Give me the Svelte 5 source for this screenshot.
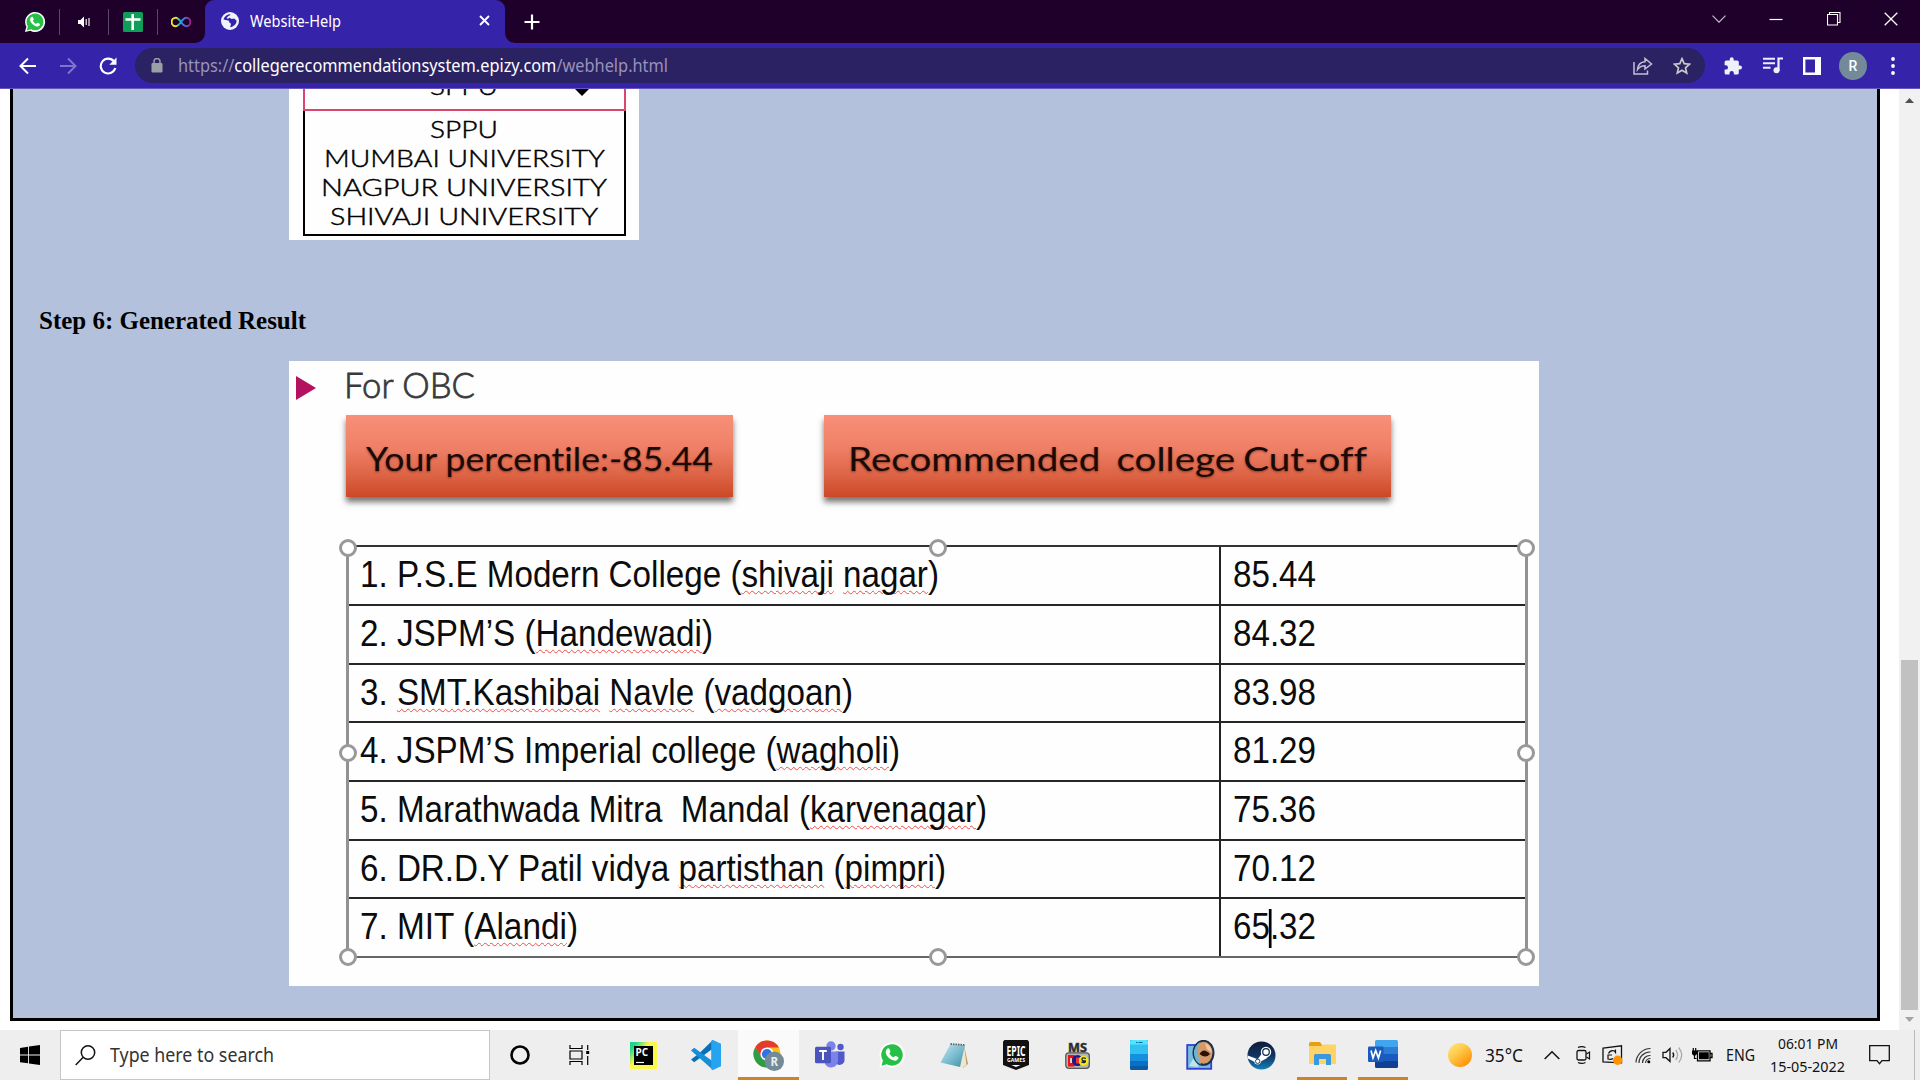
<script>
  const universities = [
    ['SPPU', 68],
    ['MUMBAI UNIVERSITY', 281],
    ['NAGPUR UNIVERSITY', 286],
    ['SHIVAJI UNIVERSITY', 268]
  ];

  // Each name is a list of [text, misspelled] parts.
  const colleges = [
    { name: [['1. P.S.E Modern College ('], ['shivaji', true], [' '], ['nagar', true], [')']], width: 579, score: ['85.44'] },
    { name: [['2. JSPM’S ('], ['Handewadi', true], [')']], width: 353, score: ['84.32'] },
    { name: [['3. '], ['SMT.Kashibai', true], [' '], ['Navle', true], [' ('], ['vadgoan', true], [')']], width: 493, score: ['83.98'] },
    { name: [['4. JSPM’S Imperial college ('], ['wagholi', true], [')']], width: 540, score: ['81.29'] },
    { name: [['5. Marathwada Mitra  Mandal ('], ['karvenagar', true], [')']], width: 627, score: ['75.36'] },
    { name: [['6. DR.D.Y Patil vidya '], ['partisthan', true], [' ('], ['pimpri', true], [')']], width: 586, score: ['70.12'] },
    { name: [['7. MIT ('], ['Alandi', true], [')']], width: 218, score: ['65', '.32'] }
  ];

  // Resize handles, in percent of the table's inner box.
  const handles = [
    [-0.12, 0], [50.05, 0], [100.12, 0],
    [-0.12, 50.1], [100.12, 50.1],
    [-0.12, 100.1], [50.05, 100.1], [100.12, 100.1]
  ];

  // Stretches or condenses a line of text to the given width.
  function fit(el, target) {
    const w = el.getBoundingClientRect().width;
    el.style.transform = `scaleX(${target / w})`;
    el.style.marginRight = `${target - w}px`;
  }
</script>

{#snippet whatsapp(size)}
  <svg width={size} height={size} viewBox="0 0 24 24">
    <path d="M1 23l1.6-5.8A10.9 10.9 0 1 1 6.900 21.500z" fill="#fff" />
    <path d="M3 21.200l1.200-4.400A9.200 9.200 0 1 1 7.600 20z" fill="#25c045" />
    <path d="M8.200 6.500c.5-.4 1.200-.4 1.500.2l.9 2c.2.5-.1.900-.9 1.800.8 1.700 2 2.800 3.800 3.500.8-1 1.100-1.400 1.600-1.200l2 1c.5.200.5.600.4 1-.5 1.700-2.200 2.400-3.800 2-3.700-1-6.100-3.500-7-6.400-.4-1.600.5-3.200 1.500-3.900z" fill="#fff" />
  </svg>
{/snippet}

<div class="screen">
  <header>
    <div class="tabs">
      <div class="pin">{@render whatsapp(22)}</div>
      <div class="pin">
        <svg width="14" height="14" viewBox="0 0 14 14"><path d="M1 5h2.500L7 1.500v11L3.500 9H1z" fill="#fff" /><path d="M9.200 4v6M12 3v8" stroke="#ddd" stroke-width="1.300" /></svg>
      </div>
      <div class="pin">
        <svg width="20" height="20" viewBox="0 0 20 20"><rect width="20" height="20" rx="1.500" fill="#0f9d58" /><path d="M9.700 2v16M2.500 7.500h15" stroke="#fff" stroke-width="2.600" /></svg>
      </div>
      <div class="pin last">
        <svg width="20" height="12" viewBox="0 0 20 12">
          <defs><linearGradient id="loop"><stop offset="0" stop-color="#f8e71c" /><stop offset=".25" stop-color="#e8e020" /><stop offset=".4" stop-color="#18b8d8" /><stop offset=".6" stop-color="#3b82e0" /><stop offset="1" stop-color="#a0208a" /></linearGradient></defs>
          <path d="M10 6C7.500 2.500 6.500 1.800 4.800 1.800a4.200 4.200 0 0 0 0 8.400C6.500 10.200 7.500 9.500 10 6s3.500-4.200 5.200-4.200a4.200 4.200 0 0 1 0 8.400C13.500 10.200 12.500 9.500 10 6z" fill="none" stroke="url(#loop)" stroke-width="2" />
        </svg>
      </div>
      <div class="tab">
        <svg class="curve left" width="10" height="10"><path d="M10 0v10H0A10 10 0 0 0 10 0z" fill="#3523a9" /></svg>
        <svg width="18" height="18" viewBox="0 0 18 18"><circle cx="9" cy="9" r="9" fill="#f1f3fa" /><path d="M9 2.200c-3 0-5.800 2.500-6.500 5.300l4.500 1c1 .2 1.500 1 1.300 2l1.700 1.200-.8 3.500c3.400-.4 6.300-3 6.400-6.400l-2.400-2.300-2.700.5-2.200-1.800L9.800 3.800z" fill="#3523a9" /><path d="M8 3.500l3-.5-1.500 2.300L7 6.800 5.500 5.900z" fill="#f1f3fa" /></svg>
        <span class="title"><span class="fit" use:fit={91}>Website-Help</span></span>
        <svg class="close" width="11" height="11" viewBox="0 0 11 11"><path d="M1 1l9 9M10 1l-9 9" stroke="#fff" stroke-width="1.900" /></svg>
        <svg class="curve right" width="10" height="10"><path d="M0 0v10h10A10 10 0 0 1 0 0z" fill="#3523a9" /></svg>
      </div>
      <svg class="plus" width="16" height="16" viewBox="0 0 16 16"><path d="M8 .5v15M.5 8h15" stroke="#fff" stroke-width="2.200" /></svg>
      <div class="window">
        <svg width="14" height="8" viewBox="0 0 14 8"><path d="M.5.7L7 7.200 13.500.7" fill="none" stroke="#c8bccb" stroke-width="1.200" /></svg>
        <svg width="14" height="14" viewBox="0 0 14 14"><path d="M.5 7.500h13" stroke="#fff" stroke-width="1.200" /></svg>
        <svg width="14" height="14" viewBox="0 0 14 14"><path d="M.5 2.500h10v10.500H.500zM2.500 2.500V.500H13v10h-2.500" fill="none" stroke="#fff" stroke-width="1.100" /></svg>
        <svg width="14" height="14" viewBox="0 0 14 14"><path d="M.7.7l12.600 12.600M13.300.7L.7 13.300" stroke="#fff" stroke-width="1.300" /></svg>
      </div>
    </div>

    <div class="toolbar">
      <div class="nav">
        <svg width="18" height="18" viewBox="0 0 18 18"><path d="M17 9H2M9 1.500L1.500 9 9 16.500" fill="none" stroke="#fff" stroke-width="2" /></svg>
        <svg width="18" height="18" viewBox="0 0 18 18"><path d="M1 9h15M9 1.500L16.500 9 9 16.500" fill="none" stroke="#8175cb" stroke-width="2" /></svg>
        <svg width="18" height="18" viewBox="0 0 18 18"><path d="M15 4.500A7.400 7.400 0 1 0 16.300 11" fill="none" stroke="#fff" stroke-width="2.100" /><path d="M17.500.5v7.200h-7.200z" fill="#fff" /></svg>
      </div>
      <div class="omnibox">
        <svg width="12" height="15" viewBox="0 0 12 15"><rect x=".5" y="5" width="11" height="9.500" rx="1.200" fill="#9aa0a6" /><path d="M3 6V3.500a3 3 0 0 1 6 0V6" fill="none" stroke="#9aa0a6" stroke-width="1.500" /></svg>
        <span class="url"><span class="fit" use:fit={490}>https://<b>collegerecommendationsystem.epizy.com</b>/webhelp.html</span></span>
        <svg class="share" width="20" height="18" viewBox="0 0 20 18"><path d="M1 5v12h13.500v-3.500" fill="none" stroke="#c3bfd3" stroke-width="1.500" /><path d="M4.500 12.500C5 7.500 8 5 12 4.800V1.500L18.500 7 12 12V8.800c-3.500 0-5.500 1-7.500 3.700z" fill="none" stroke="#c3bfd3" stroke-width="1.500" /></svg>
        <svg width="18" height="18" viewBox="0 0 18 18"><path d="M9 1.700l2.200 5 5.400.5-4.100 3.600 1.200 5.300L9 13.300l-4.700 2.800 1.200-5.300L1.400 7.200l5.400-.5z" fill="none" stroke="#c9c9c9" stroke-width="1.700" /></svg>
      </div>
      <div class="actions">
        <svg width="18" height="18" viewBox="0 0 18 18"><path d="M16 8.500h-1.200V5a1.600 1.600 0 0 0-1.600-1.600H9.700V2.200a2 2 0 0 0-4 0v1.200H2.200A1.600 1.600 0 0 0 .6 5v3.200h1.200a2.200 2.200 0 0 1 0 4.400H.6v3.300a1.600 1.600 0 0 0 1.600 1.600h3.300v-1.200a2.200 2.200 0 0 1 4.400 0v1.200h3.300a1.600 1.600 0 0 0 1.600-1.600v-3.400H16a2 2 0 0 0 0-4z" fill="#eef0fb" /></svg>
        <svg width="20" height="17" viewBox="0 0 20 17"><path d="M0 1.800h12M0 6.300h12M0 10.800h7.500" stroke="#eef0fb" stroke-width="2" /><path d="M15.500 14V1.500H20" fill="none" stroke="#eef0fb" stroke-width="2.200" /><circle cx="13.500" cy="13.300" r="3" fill="#eef0fb" /></svg>
        <svg width="18" height="18" viewBox="0 0 18 18"><path d="M1.200 1.200h15.600v15.600H1.200z" fill="none" stroke="#fff" stroke-width="2.400" /><path d="M12 1h5v16h-5z" fill="#fff" /></svg>
        <div class="avatar">R</div>
        <svg width="4" height="18" viewBox="0 0 4 18"><circle cx="2" cy="2" r="1.900" fill="#fff" /><circle cx="2" cy="9" r="1.900" fill="#fff" /><circle cx="2" cy="16" r="1.900" fill="#fff" /></svg>
      </div>
    </div>
  </header>

  <main>
    <div class="page">
      <div class="picker">
        <div class="select">
          <span class="fit" use:fit={68}>SPPU</span>
          <svg width="14" height="8" viewBox="0 0 14 8"><path d="M0 0h14L7 7z" /></svg>
        </div>
        <div class="options">
          {#each universities as [label, width]}
            <div><span class="fit" use:fit={width}>{label}</span></div>
          {/each}
        </div>
      </div>

      <h2><span class="fit" use:fit={267}>Step 6: Generated Result</span></h2>

      <div class="result">
        <div class="caption">
          <svg width="20" height="24" viewBox="0 0 20 24"><path d="M0 0l20 12L0 24z" fill="#b3125f" /></svg>
          <span class="fit" use:fit={131}>For OBC</span>
        </div>
        <div class="cards">
          <div class="card mine"><span class="fit" use:fit={347}>Your percentile:-85.44</span></div>
          <div class="card cut"><span class="fit" use:fit={519}>Recommended  college Cut-off</span></div>
        </div>
        <div class="table">
          {#each colleges as college}
            <div class="row">
              <div class="name"><span class="fit" use:fit={college.width}>{#each college.name as [text, wrong]}<span class:wrong>{text}</span>{/each}</span></div>
              <div class="score"><span class="fit" use:fit={83}>{college.score[0]}{#if college.score[1]}<i class="caret"></i>{college.score[1]}{/if}</span></div>
            </div>
          {/each}
          {#each handles as [x, y]}
            <i class="handle" style="left: {x}%; top: {y}%"></i>
          {/each}
        </div>
      </div>
    </div>

    <div class="scrollbar">
      <svg width="9" height="5" viewBox="0 0 9 5"><path d="M0 5l4.500-5L9 5z" fill="#505050" /></svg>
      <div class="thumb"></div>
      <svg width="9" height="5" viewBox="0 0 9 5"><path d="M0 0l4.500 5L9 0z" fill="#a3a3a3" /></svg>
    </div>
  </main>

  <footer>
    <div class="start">
      <svg width="20" height="20" viewBox="0 0 20 20"><path d="M0 2.900l8.100-1.200v7.900H0zM9 1.500L20 0v9.600H9zM0 10.400h8.100v7.900L0 17.200zM9 10.400h11V20L9 18.500z" /></svg>
    </div>
    <div class="search">
      <svg width="21" height="21" viewBox="0 0 21 21"><circle cx="13" cy="7.500" r="6.700" fill="none" stroke="#111" stroke-width="1.500" /><path d="M8.200 12.300L.7 20" stroke="#111" stroke-width="1.500" /></svg>
      <span class="fit" use:fit={164}>Type here to search</span>
    </div>

    <div class="apps">
      <div class="app cortana"><svg width="20" height="20" viewBox="0 0 20 20"><circle cx="10" cy="10" r="8.500" fill="none" stroke="#000" stroke-width="2.600" /></svg></div>
      <div class="app views"><svg width="21" height="22" viewBox="0 0 21 20"><path d="M1 0v3.500h12V0M1 20v-3.500h12V20M1 6h12v8H1zM18.700 0v5M18.700 11v9" fill="none" stroke="#000" stroke-width="1.200" /><path d="M17.200 6h3v3h-3z" /></svg></div>
      <div class="app">
        <svg width="27" height="27" viewBox="0 0 27 27">
          <defs><linearGradient id="pc" x2="1" y2=".8"><stop offset="0" stop-color="#15d58f" /><stop offset=".15" stop-color="#21d789" /><stop offset=".45" stop-color="#fcf84a" /></linearGradient></defs>
          <rect width="27" height="27" fill="url(#pc)" /><rect x="4" y="4" width="19" height="19" /><text x="5.500" y="14" font-size="10" font-weight="700" fill="#fff">PC</text><path d="M6 20.500h8" stroke="#fff" stroke-width="1.200" />
        </svg>
      </div>
      <div class="app">
        <svg width="30" height="30" viewBox="0 0 30 30"><path d="M0 19.500l3.200 2.700L22 8.500V0L8 13.500z" fill="#0871b5" /><path d="M0 10.500l3.200-2.700L22 21.500V30z" fill="#168fd6" /><path d="M22 0l8 3.700v22.600L22 30c-1 0-1.800-.7-1.800-1.500V1.500C20.200.7 21 0 22 0z" fill="#27a3f0" /></svg>
      </div>
      <div class="app active">
        <svg width="31" height="31" viewBox="0 0 31 31">
          <circle cx="14" cy="14" r="13.500" fill="#fbc116" /><path d="M14 7.500h11.900A13.500 13.500 0 0 0 2.300 7.200L8 17z" fill="#e33b2e" /><path d="M2.300 7.200A13.500 13.500 0 0 0 14 27.500l6-10.500H8.400z" fill="#2c9c48" />
          <circle cx="14" cy="14" r="6.600" fill="#fff" /><circle cx="14" cy="14" r="5.100" fill="#2f73e8" />
          <circle cx="21.300" cy="21.300" r="9.700" fill="#738b98" /><text x="21.300" y="25.500" font-size="11.500" text-anchor="middle" fill="#e8edf0" font-weight="700">R</text>
        </svg>
      </div>
      <div class="app">
        <svg width="30" height="28" viewBox="0 0 30 28"><circle cx="25.500" cy="6" r="3.200" fill="#5059c9" /><circle cx="16" cy="5" r="4.700" fill="#7b83eb" /><path d="M21 10.500h8.500V19a5 5 0 0 1-8.500 3.500z" fill="#5059c9" /><path d="M10 10.500h13V20a7 7 0 0 1-13 3z" fill="#7b83eb" /><rect y="5.800" width="16" height="16.500" rx="1.500" fill="#4b53bc" /><path d="M4.200 10h7.600M8 10v9" stroke="#fff" stroke-width="1.900" /></svg>
      </div>
      <div class="app">{@render whatsapp(28)}</div>
      <div class="app">
        <svg width="28" height="27" viewBox="0 0 28 27">
          <defs><linearGradient id="np" x2="1" y2="1"><stop offset="0" stop-color="#c7e7ee" /><stop offset=".5" stop-color="#7fbfd2" /><stop offset="1" stop-color="#3d8ea6" /></linearGradient></defs>
          <path d="M24 3l4 19-5 4z" fill="#b99a63" /><path d="M24 3l2.500 20-3.500 2.500-8-1z" fill="#eee6d0" /><path d="M10.500 2L25 3l-5 22L.5 20.500z" fill="url(#np)" /><path d="M10.500 2L25 3" stroke="#666" stroke-width="1.800" stroke-dasharray="1.500 1" />
        </svg>
      </div>
      <div class="app">
        <svg width="26" height="30" viewBox="0 0 26 30"><path d="M1.500 0h23L26 1.500V25l-13 5L0 25V1.500z" fill="#111" /><text x="3.500" y="15.500" font-size="15" font-weight="700" fill="#fff" textLength="19" lengthAdjust="spacingAndGlyphs">EPIC</text><text x="4" y="22" font-size="5.500" font-weight="700" fill="#fff" textLength="18" lengthAdjust="spacingAndGlyphs">GAMES</text><path d="M8.500 25h9L13 27z" fill="#fff" /></svg>
      </div>
      <div class="app">
        <svg width="26" height="30" viewBox="0 0 26 30"><text x="3" y="12" font-size="13" font-weight="700" fill="#222" stroke="#444" stroke-width=".6" textLength="19" lengthAdjust="spacingAndGlyphs">MS</text><rect x=".8" y="12.800" width="23.500" height="15.500" rx="3" fill="#b5b5b5" stroke="#555" stroke-width="1.300" /><path d="M3 15h5.500q3 0 3 5.500t-3 6H3z" fill="#e11" /><path d="M6 18v5" stroke="#fff" stroke-width="1.500" /><circle cx="12.500" cy="20.500" r="5.500" fill="#161a8c" /><circle cx="18.500" cy="20.700" r="5" fill="#f5e81b" /><path d="M21 18.500q-4-1.500-4 .8t3.200 1.500q1 2.400-3.800 1.400" fill="none" stroke="#222" stroke-width="1.300" /><path d="M12.500 17.500v6" stroke="#e33" stroke-width="3" /></svg>
      </div>
      <div class="app narrow">
        <svg width="18" height="30" viewBox="0 0 18 30"><rect width="18" height="30" rx="1.500" fill="#0c59a4" /><path d="M0 6h18v20H0z" fill="#0c6fc6" /><path d="M0 2q0-2 2-2h14q2 0 2 2v19H0z" fill="#1490df" /><path d="M0 2q0-2 2-2h14q2 0 2 2v12H0z" fill="#32c0f0" /><path d="M0 2q0-2 2-2h14q2 0 2 2v2.500H0z" fill="#50e6ff" /><path d="M6 2.500h1.500M8.500 2.500h4" stroke="#135c9c" stroke-width="1" /></svg>
      </div>
      <div class="app narrow">
        <svg width="29" height="30" viewBox="0 0 29 30"><rect x="1.200" y="5" width="24" height="23.800" fill="#77bedd" stroke="#3340cf" stroke-width="1.800" /><path d="M3 26l7-12 2 13z" fill="#bfe5f0" /><ellipse cx="17.500" cy="12.800" rx="10" ry="12" fill="#d69a6a" stroke="#18324d" stroke-width="2" /><path d="M14 2q-5 9 1 22.500-6-2-7-10T14 2z" fill="#6fb3d0" /><path d="M13.500 14q4-7 10.500 0-4.500 5-10.500 0z" fill="#2a120a" /><path d="M19 3q6 2 7 10l-5-4z" fill="#f0c9a0" /></svg>
      </div>
      <div class="app narrow">
        <svg width="29" height="29" viewBox="0 0 29 29">
          <defs><linearGradient id="st" x2="0" y2="1"><stop offset="0" stop-color="#101c3b" /><stop offset=".5" stop-color="#10345f" /><stop offset="1" stop-color="#1380b8" /></linearGradient></defs>
          <circle cx="14.500" cy="14.500" r="14" fill="url(#st)" /><path d="M.7 14.500l10 3.800 4-5.500 6 4-6.500 3.500q-1 3.500-4 3.200-2.500-.3-3-2.700L.9 17.500z" fill="#fff" /><circle cx="19" cy="11" r="5.200" fill="#fff" /><circle cx="19" cy="11" r="3.300" fill="#fff" stroke="#10284d" stroke-width="1.200" /><circle cx="10.700" cy="20.300" r="2.200" fill="none" stroke="#10345f" stroke-width=".9" />
        </svg>
      </div>
      <div class="app open">
        <svg width="27" height="24" viewBox="0 0 27 24"><path d="M0 1.500Q0 0 1.500 0H11l2 3v4H0z" fill="#e6a010" /><path d="M0 4h12l2-1.500h12q1 0 1 1V21q0 1-1 1H1q-1 0-1-1z" fill="#ffd366" /><path d="M5 23v-9.500q0-1.500 1.500-1.500h14q1.500 0 1.500 1.500V23h-5v-6h-7v6z" fill="#3a98e0" /></svg>
      </div>
      <div class="app open">
        <svg width="30" height="28" viewBox="0 0 30 28"><path d="M7 1.500Q7 0 8.500 0h20Q30 0 30 1.500V7H7z" fill="#41a5ee" /><path d="M7 7h23v7H7z" fill="#2b7cd3" /><path d="M7 14h23v7H7z" fill="#185abd" /><path d="M7 21h23v5.500q0 1.500-1.500 1.500h-20Q7 28 7 26.500z" fill="#103f91" /><rect y="6.500" width="15.500" height="15.500" rx="1.200" fill="#185abd" /><path d="M3 10.500l2 7.500 2.700-7.500 2.700 7.500 2.200-7.500" fill="none" stroke="#fff" stroke-width="1.700" /></svg>
      </div>
    </div>

    <div class="tray">
      <svg class="sun" width="24" height="24" viewBox="0 0 24 24"><defs><linearGradient id="sun" x1=".15" y1=".1" x2=".8" y2=".9"><stop offset="0" stop-color="#ffe070" /><stop offset=".4" stop-color="#fdc84a" /><stop offset="1" stop-color="#ff9306" /></linearGradient></defs><circle cx="12" cy="12" r="12" fill="url(#sun)" /></svg>
      <span class="temp"><span class="fit" use:fit={38}>35°C</span></span>
      <svg class="up" width="16" height="10" viewBox="0 0 16 10"><path d="M.7 9L8 1.700 15.300 9" fill="none" stroke="#111" stroke-width="1.500" /></svg>
      <svg class="cam" width="15" height="18" viewBox="0 0 15 18"><rect x="1" y="4.500" width="9" height="9.500" rx="1.500" fill="none" stroke="#111" stroke-width="1.300" /><path d="M10.500 8l3-2v7l-3-2M2 1.500Q5.500-.3 9.500 1.500M2 16.500q3.500 1.800 7.500 0" fill="none" stroke="#111" stroke-width="1.200" /></svg>
      <svg class="sync" width="21" height="20" viewBox="0 0 21 20"><path d="M1 3.200L19.500.8v17L1 16.800z" fill="none" stroke="#111" stroke-width="1.300" /><path d="M6.500 8.500q2-4 6-2.500l1 1.500V4.500M6 14V10h4M6 10v4q3 1 5-.5" fill="none" stroke="#111" stroke-width="1.200" /><circle cx="15.700" cy="15.200" r="4.700" fill="#ff9300" /></svg>
      <svg class="wifi" width="16" height="17" viewBox="0 0 16 17"><path d="M1 15.500A14.500 14.500 0 0 1 15.500 1.500" fill="none" stroke="#333" stroke-width="1.200" /><path d="M4 16A11 11 0 0 1 15.500 5M7.500 16a7.500 7.500 0 0 1 8-7.500" fill="none" stroke="#333" stroke-width="1.200" /><path d="M10.500 16a5 5 0 0 1 5-4.500" fill="none" stroke="#333" stroke-width="1.100" /><circle cx="13.800" cy="14.800" r="1.500" /></svg>
      <svg class="vol" width="21" height="18" viewBox="0 0 21 18"><path d="M1 6.300h3L8 2.500v13l-4-3.800H1z" fill="none" stroke="#111" stroke-width="1.300" /><path d="M10.700 6.500q2 2.500 0 5" fill="none" stroke="#111" stroke-width="1.300" /><path d="M13.700 4q3.800 5 0 10M16.700 1.500q6 7.500 0 15" fill="none" stroke="#aaa" stroke-width="1.300" /></svg>
      <svg class="bat" width="21" height="14" viewBox="0 0 21 14"><path d="M5.500 2.800H18v10H5.500zM18.500 5.500h1.500v4h-1.500" fill="none" stroke="#000" stroke-width="1.300" /><path d="M7 4.300h9.800v7H7zM0 2.500h5V6L3.500 7.500h-2L0 6z" /><path d="M1.300 0v3M3.700 0v3M2.500 7v3.500h2" fill="none" stroke="#000" stroke-width="1.200" /></svg>
      <span class="lang"><span class="fit" use:fit={29}>ENG</span></span>
      <div class="clock">
        <div><span class="fit" use:fit={60}>06:01 PM</span></div>
        <div><span class="fit" use:fit={75}>15-05-2022</span></div>
      </div>
      <svg class="note" width="21" height="20" viewBox="0 0 21 20"><path d="M.7.7h19.600v15H13l-2.500 3-2.500-3H.7z" fill="none" stroke="#111" stroke-width="1.300" /></svg>
    </div>
  </footer>
</div>

<style>
  :global(body) { margin: 0; overflow: hidden; }
  .screen { width: 1920px; height: 1080px; display: flex; flex-direction: column; background: #fff; overflow: hidden; font-family: 'Noto Sans', 'Open Sans', sans-serif; }
  svg { display: block; flex: none; }
  .fit { display: inline-block; white-space: pre; transform-origin: 0 50%; flex: none; }

  .tabs { height: 43px; background: #1e002a; display: flex; align-items: center; padding-left: 11px; box-sizing: border-box; }
  .pin { width: 49px; height: 26px; display: flex; align-items: center; justify-content: center; border-right: 1px solid #5b4663; box-sizing: border-box; padding-bottom: 1px; margin-top: 1px; }
  .pin.last { width: 47px; border-right: 0; }
  .pin.last svg { margin-right: 2px; }
  .tab { position: relative; width: 300px; height: 43px; box-sizing: border-box; padding: 0 15px 2px 16px; background: #3523a9; border-radius: 9px 9px 0 0; display: flex; align-items: center; }
  .title { margin-left: 11px; flex: 1; font-size: 15.500px; line-height: 20px; color: #fff; }
  .curve { position: absolute; bottom: 0; }
  .curve.left { left: -10px; }
  .curve.right { right: -10px; }
  .plus { margin-left: 19px; }
  .window { margin-left: auto; display: flex; align-items: center; gap: 43.300px; padding: 0 22px 6px 0; }

  .toolbar { height: 45px; background: #3523a9; border-bottom: 1px solid #6555bd; box-sizing: content-box; display: flex; align-items: center; }
  .nav { width: 135px; display: flex; gap: 22px; padding-left: 19px; box-sizing: border-box; }
  .omnibox { width: 1570px; height: 35px; border-radius: 18px; background: #2b2264; display: flex; align-items: center; padding: 0 14px 0 16px; box-sizing: border-box; }
  .url { flex: 1; margin-left: 15px; padding-bottom: 2px; font-size: 18px; line-height: 26px; color: #9a93b8; }
  .url b { font-weight: 400; color: #fff; }
  .share { margin-right: 20px; }
  .actions { display: flex; align-items: center; padding-left: 19px; }
  .actions svg:nth-child(2) { margin-left: 21px; }
  .actions svg:nth-child(3) { margin-left: 20px; }
  .avatar { width: 28px; height: 28px; border-radius: 50%; margin: 0 24px 0 18px; background: #738b98; color: #fff; font-size: 14px; line-height: 28px; text-align: center; font-family: Roboto, sans-serif; font-weight: 500; }

  main { height: 941px; display: flex; justify-content: space-between; }
  .page { width: 1870px; height: 932px; box-sizing: border-box; margin-left: 10px; background: #b4c1dc; border: 3px solid #000; border-top: 0; overflow: hidden; }
  .picker { width: 350px; height: 151px; box-sizing: border-box; margin-left: 276px; padding: 0 13px 4px 14px; background: #fefefe; font: 300 23.500px/29px Lato, sans-serif; color: #000; -webkit-text-stroke: .45px #000; }
  .select { height: 22px; box-sizing: border-box; border: 2px solid #d9466f; border-top: 0; padding-left: 125px; display: flex; align-items: flex-start; }
  .select .fit { margin-top: -17px; }
  .select svg { margin-left: 77px; }
  .options { height: 125px; box-sizing: border-box; border: 2px solid #000; border-top: 0; padding: 4px 1px 0 0; text-align: center; }
  .options div { height: 29px; }
  h2 { margin: 67px 0 26px 26px; font: 700 24.500px/28px 'Liberation Serif', serif; height: 28px; color: #000; }

  .result { width: 1250px; height: 625px; margin-left: 276px; background: #fefefe; overflow: hidden; }
  .caption { height: 54px; display: flex; align-items: flex-start; padding: 3px 0 0 7px; box-sizing: border-box; font: 300 34.500px/42px Lato, sans-serif; color: #3a3a3a; -webkit-text-stroke: .8px #3a3a3a; }
  .caption svg { margin: 12px 28px 0 0; }
  .cards { display: flex; gap: 91px; padding-left: 57px; font: 400 33px/40px Lato, sans-serif; color: #1a0a06; font-variant-ligatures: none; }
  .card { height: 81.500px; box-sizing: border-box; padding-top: 23px; background: linear-gradient(#f88f78, #ef8067 40%, #dc6243 75%, #cc4827); box-shadow: 0 5px 6px rgba(0, 0, 0, .55); text-shadow: 0 1px 2px rgba(60, 10, 0, .5); }
  .mine { width: 387px; padding-left: 20px; }
  .cut { width: 567px; padding-left: 24px; word-spacing: -1.500px; }
  .table { position: relative; margin: 48.500px 0 0 57px; width: 1182px; height: 413px; box-sizing: border-box; border: 3px solid #929292; border-width: 2px 3px; border-top-color: #333; border-bottom-color: #666; display: grid; grid-template-rows: 57px repeat(6, 1fr); font: 37px/55px 'Liberation Sans', sans-serif; color: #0c0c0c; }
  .row { display: flex; border-top: 2px solid #262626; box-sizing: border-box; min-height: 0; }
  .row:first-child { border-top: 0; }
  .name { width: 872px; box-sizing: border-box; padding-left: 11px; border-right: 2px solid #222; }
  .score { padding-left: 12px; }
  .wrong { text-decoration: underline wavy #f04a4a 1px; text-underline-offset: 3px; text-decoration-skip-ink: none; }
  .caret { display: inline-block; width: 3px; height: 39px; margin: 0 -1.500px; background: #000; vertical-align: -9px; }
  .handle { position: absolute; width: 18px; height: 18px; box-sizing: border-box; margin: -8px -9px; border: 3px solid #999; border-radius: 50%; background: #fff; }

  .scrollbar { width: 21px; background: #f1f1f1; display: flex; flex-direction: column; align-items: center; padding: 9px 0 8px; box-sizing: border-box; }
  .thumb { width: 17px; height: 350px; background: #c1c1c1; margin: auto 0 7px; }

  footer { height: 50px; background: #eee; display: flex; align-items: stretch; }
  .start { width: 60px; display: flex; align-items: center; justify-content: center; }
  .search { width: 430px; box-sizing: border-box; border: 1px solid #c6c6c6; background: #fff; display: flex; align-items: center; gap: 14px; padding-left: 14px; font-size: 19px; color: #333; }
  .apps { display: flex; }
  .app { width: 62px; box-sizing: border-box; display: flex; align-items: center; justify-content: center; }
  .app.cortana { width: 60px; }
  .app.views { width: 62.700px; padding-right: 3px; }
  .app.narrow { width: 61px; }
  .app.active { width: 61px; margin: 0 0 0 1px; background: #fafafa; border-bottom: 3px solid #cc8427; padding-top: 3px; }
  .app.open { width: 50px; margin: 0 5.500px; border-bottom: 3px solid #cc8427; }
  .app svg text { font-family: 'Noto Sans', sans-serif; }
  .tray { flex: 1; display: flex; align-items: center; color: #111; border-right: 1px solid #bbb; margin-right: 5px; }
  .sun { margin-left: 34px; }
  .temp { margin-left: 13px; font-size: 18px; }
  .up { margin-left: 21px; }
  .cam { margin-left: 16px; }
  .sync { margin-left: 11px; }
  .wifi { margin-left: 12px; }
  .vol { margin-left: 11px; }
  .bat { margin-left: 9px; }
  .lang { margin-left: 13px; font-size: 15.500px; }
  .clock { width: 75px; margin-left: 15.500px; font-size: 15px; line-height: 23px; text-align: center; }
  .clock div { height: 23px; }
  .note { margin-left: 23.500px; }
</style>
